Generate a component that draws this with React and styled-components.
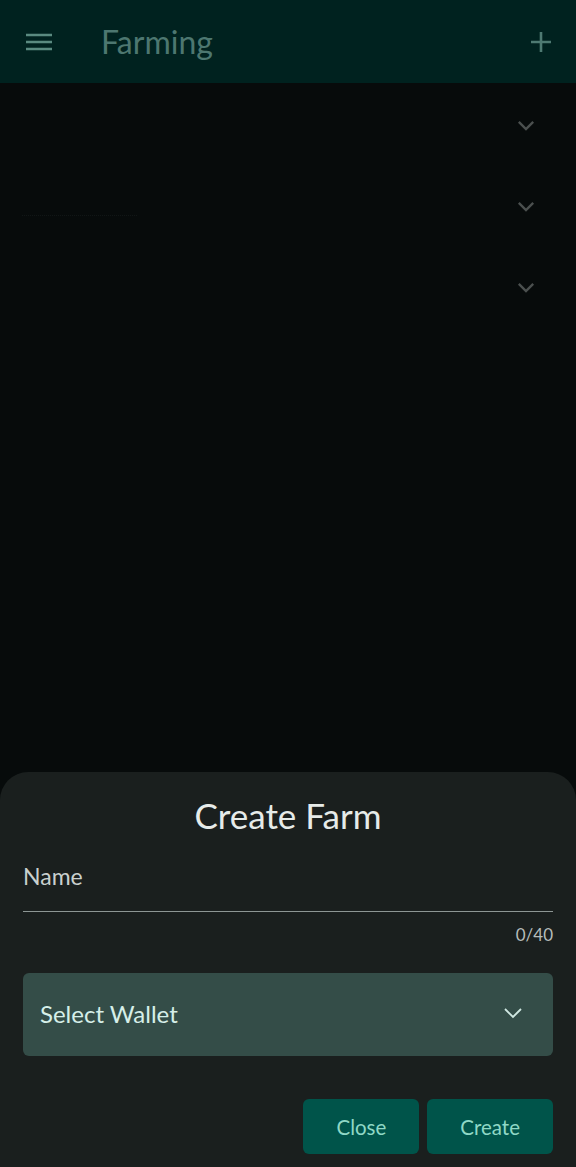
import React from "react"
import styled, {createGlobalStyle} from "styled-components"

const GlobalStyle = createGlobalStyle`
  html, body {
    margin: 0;
    padding: 0;
    background: #070b0b;
  }
  body {
    font-family: Lato, "Noto Sans", sans-serif;
  }
`

const Page = styled.div`
  min-height: 100vh;
  display: flex;
  flex-direction: column;
  background: #070b0b;
`

const TopBar = styled.header`
  height: 83px;
  display: flex;
  align-items: center;
  padding: 0 24px 0 26px;
  background: #00221f;
  color: #4f7a73;
`

const Title = styled.h1`
  margin: 0 0 0 49px;
  flex: 1;
  font-size: 32px;
  font-weight: 400;
  color: #4d7770;
`

const List = styled.div`
  padding-top: 2px;
  display: flex;
  flex-direction: column;
`

const Row = styled.div`
  height: 81px;
  display: flex;
  align-items: center;
  justify-content: space-between;
  padding: 0 41px 0 22px;
`

const Ghost = styled.span`
  width: 115px;
  border-top: 1px dotted #111616;
  margin-top: 18px;
  visibility: ${p => (p.show ? "visible" : "hidden")};
`

const Sheet = styled.section`
  margin-top: auto;
  background: #1a1f1e;
  border-radius: 28px 28px 0 0;
  padding: 24px 23px 13px;
  display: flex;
  flex-direction: column;
`

const SheetTitle = styled.h2`
  margin: 0;
  text-align: center;
  font-size: 35px;
  line-height: 38px;
  font-weight: 400;
  color: #e6ebe9;
`

const Field = styled.div`
  margin-top: 28px;
  height: 49px;
  border-bottom: 1px solid #8d9694;
  font-size: 23px;
  line-height: 28px;
  color: #c9d0ce;
`

const Counter = styled.div`
  margin-top: 13px;
  text-align: right;
  font-size: 17px;
  line-height: 20px;
  color: #b5bcba;
`

const Select = styled.div`
  margin-top: 28px;
  height: 83px;
  box-sizing: border-box;
  padding: 0 30px 3px 17px;
  border-radius: 6px;
  background: #344d48;
  display: flex;
  align-items: center;
  justify-content: space-between;
  font-size: 24px;
  color: #d6efe9;
`

const Actions = styled.div`
  margin-top: 43px;
  display: flex;
  justify-content: flex-end;
  gap: 8px;
`

const Button = styled.button`
  height: 55px;
  padding: 0 ${p => (p.wide ? 33 : 33)}px;
  border: none;
  border-radius: 6px;
  background: #00544a;
  color: #8fd8c6;
  font-family: Lato, "Noto Sans", sans-serif;
  font-size: 20.5px;
`

const Menu = () => (
  <svg width="26" height="18" viewBox="0 0 26 18">
    <path d="M0 2h26M0 9h26M0 16h26" stroke="#5a8a80" strokeWidth="2.6" />
  </svg>
)

const Plus = () => (
  <svg width="22" height="22" viewBox="0 0 22 22">
    <path d="M11 1v20M1 11h20" stroke="#4e7a72" strokeWidth="2.6" />
  </svg>
)

const Chevron = ({color, size = 18, width = 2.6}) => (
  <svg width={size} height={size * 0.6} viewBox="0 0 20 12">
    <path d="M2 2l8 8 8-8" fill="none" stroke={color} strokeWidth={width} />
  </svg>
)

export default function App() {
  return (
    <Page>
      <GlobalStyle />
      <TopBar>
        <Menu />
        <Title>Farming</Title>
        <Plus />
      </TopBar>
      <List>
        {[0, 1, 2].map(i => (
          <Row key={i}>
            <Ghost show={i === 1} />
            <Chevron color="#4b504f" />
          </Row>
        ))}
      </List>
      <Sheet>
        <SheetTitle>Create Farm</SheetTitle>
        <Field>Name</Field>
        <Counter>0/40</Counter>
        <Select>
          Select Wallet
          <Chevron color="#d0e8e2" size={20} width={1.8} />
        </Select>
        <Actions>
          <Button>Close</Button>
          <Button wide>Create</Button>
        </Actions>
      </Sheet>
    </Page>
  )
}
